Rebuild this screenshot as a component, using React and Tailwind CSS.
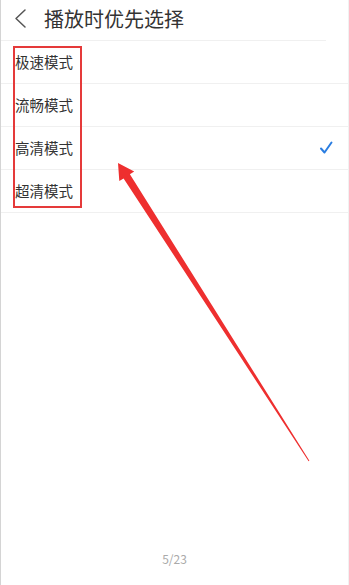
export default function App() {
  const rows = ["极速模式", "流畅模式", "高清模式", "超清模式"];
  return (
    <div
      className="relative w-[349px] h-[585px] bg-white overflow-hidden border-l border-[#d4d4d4] border-r border-r-[#f1f1f1]"
      style={{ fontFamily: '"Noto Sans CJK SC", "Noto Sans", sans-serif' }}
    >
      <div className="h-[41px] flex items-center border-b border-[#f0f0f0] mr-[22px]">
        <svg width="44" height="40" viewBox="0 0 44 40" className="shrink-0 -ml-px">
          <path d="M25 10 L16 18.5 L25 27" fill="none" stroke="#555" strokeWidth="1.5" strokeLinecap="round" strokeLinejoin="round" />
        </svg>
        <span className="text-[20px] leading-none text-[#333] -mt-[2px]">播放时优先选择</span>
      </div>
      <div className="flex flex-col">
        {rows.map((r, i) => (
          <div key={r} className="h-[43px] flex items-center justify-between pl-[14px] pr-[15px] border-b border-[#f0f0f0]">
            <span className="text-[14.5px] text-[#333] leading-none">{r}</span>
            {i === 2 && (
              <svg width="14" height="14" viewBox="0 0 14 14">
                <path d="M2 7.5 L5.5 11.5 L12.5 1.5" fill="none" stroke="#2a7de1" strokeWidth="2" strokeLinecap="round" strokeLinejoin="round" />
              </svg>
            )}
          </div>
        ))}
      </div>
      <div className="absolute left-[12px] top-[46px] w-[69px] h-[162px] border-2 border-[#e53a3a]" />
      <svg className="absolute left-0 top-0 pointer-events-none" width="349" height="585" viewBox="0 0 349 585">
        <polygon points="117,163 133.2,171.6 128.9,174.3 308.4,460.7 307.6,461.3 122.6,178.4 118.3,181.1" fill="#ee2f2f" />
      </svg>
      <div className="absolute left-0 right-0 top-[550px] text-center text-[12px] text-[#aaa]">5/23</div>
    </div>
  );
}
